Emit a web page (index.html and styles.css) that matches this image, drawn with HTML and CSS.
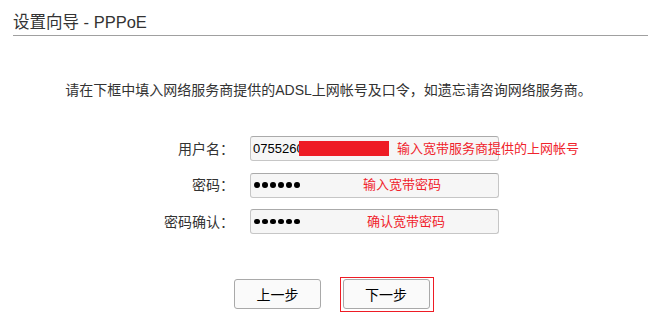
FILE: index.html
```html
<!DOCTYPE html>
<html lang="zh-CN">
<head>
<meta charset="utf-8">
<title>设置向导 - PPPoE</title>
<link rel="stylesheet" href="styles.css">
</head>
<body>
<div class="header"><h1 class="title">设置向导 - PPPoE</h1></div>
<p class="intro">请在下框中填入网络服务商提供的ADSL上网帐号及口令，如遗忘请咨询网络服务商。</p>
<div class="form">
  <label class="label">用户名：</label>
  <div class="field">
    <span class="value">0755260</span>
    <span class="mask"></span>
    <span class="hint hint-user">输入宽带服务商提供的上网帐号</span>
  </div>
  <label class="label">密码：</label>
  <div class="field">
    <span class="dots"><i></i><i></i><i></i><i></i><i></i><i></i></span>
    <span class="hint hint-pass">输入宽带密码</span>
  </div>
  <label class="label">密码确认：</label>
  <div class="field">
    <span class="dots"><i></i><i></i><i></i><i></i><i></i><i></i></span>
    <span class="hint hint-confirm">确认宽带密码</span>
  </div>
</div>
<div class="actions">
  <button class="btn btn-prev" type="button">上一步</button>
  <span class="highlight"><button class="btn" type="button">下一步</button></span>
</div>
</body>
</html>
```
FILE: styles.css
```css
html, body {
  margin: 0;
  padding: 0;
  background: #fff;
}
body {
  font-family: "Liberation Sans", "Noto Sans CJK SC", sans-serif;
  color: #333;
}
.header {
  margin: 0 4px 0 13px;
  padding-top: 12px;
  padding-bottom: 3px;
  border-bottom: 1px solid #a0a0a0;
}
.title {
  margin: 0;
  font-size: 16.5px;
  font-weight: normal;
  line-height: 20px;
  color: #333;
}
.intro {
  margin: 44px 0 0 0;
  padding-left: 5px;
  text-align: center;
  font-size: 14px;
  line-height: 20px;
  color: #333;
}
.form {
  margin-top: 36px;
  display: grid;
  grid-template-columns: 234px 249px;
  column-gap: 16px;
  row-gap: 11.5px;
  grid-auto-rows: 25px;
}
.label {
  justify-self: end;
  align-self: center;
  font-size: 14px;
  line-height: 20px;
  color: #333;
}
.field {
  position: relative;
  box-sizing: border-box;
  height: 25px;
  display: flex;
  align-items: center;
  padding-left: 2px;
  background: #f6f6f6;
  border: 1px solid #c6c6c6;
  border-top-color: #aaa;
  border-radius: 3px;
}
.value {
  font-size: 13px;
  color: #000;
}
.mask {
  position: absolute;
  left: 48px;
  top: 4px;
  width: 90px;
  height: 15px;
  background: #ee1c25;
}
.hint {
  position: absolute;
  top: 50%;
  transform: translateY(-50%);
  white-space: nowrap;
  font-size: 13px;
  line-height: 18px;
  color: #f0232c;
}
.hint-user { left: 146px; }
.hint-pass { left: 112px; }
.hint-confirm { left: 116px; }
.dots {
  display: flex;
  gap: 2.2px;
  padding-left: 1px;
}
.dots i {
  display: block;
  width: 5.8px;
  height: 5.8px;
  border-radius: 50%;
  background: #000;
}
.actions {
  margin: 43px 0 0 234px;
  display: flex;
  align-items: flex-start;
  gap: 19px;
}
.btn {
  box-sizing: border-box;
  width: 87px;
  height: 30px;
  margin: 0;
  padding: 0;
  background: #fafafa;
  border: 1px solid #a9a9a9;
  border-radius: 3px;
  font-family: "Liberation Sans", "Noto Sans CJK SC", sans-serif;
  font-size: 14px;
  color: #000;
}
.btn-prev {
  margin-top: 2px;
}
.highlight {
  display: block;
  padding: 0.5px 3.5px 2.2px 1.5px;
  border: 1.5px solid #ee1c25;
}
.highlight .btn {
  display: block;
}
```
